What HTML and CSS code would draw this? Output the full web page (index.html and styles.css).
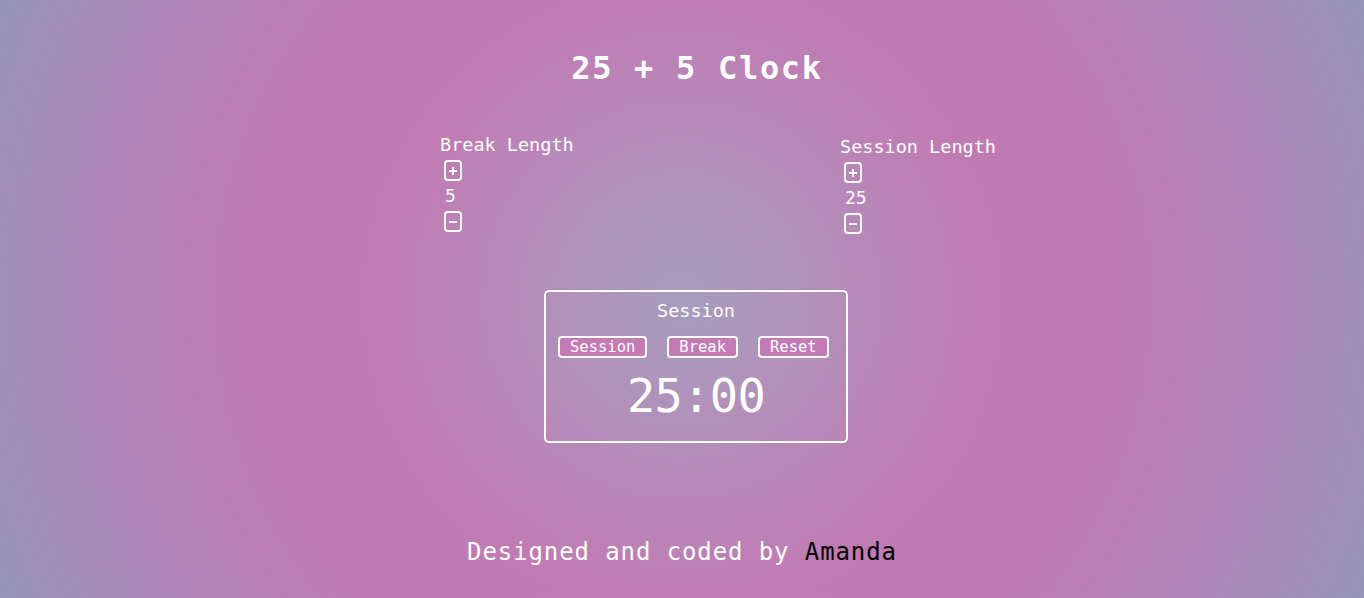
FILE: index.html
```html
<!DOCTYPE html>
<html lang="en">
<head>
<meta charset="utf-8">
<title>25 + 5 Clock</title>
<link rel="stylesheet" href="styles.css">
</head>
<body>
<div class="app">
  <h1 class="title">25 + 5 Clock</h1>
  <div class="controls">
    <div class="control control-break">
      <div class="control-label">Break Length</div>
      <button class="step-btn" aria-label="increment break">
        <svg width="10" height="10" viewBox="0 0 10 10"><path d="M5 1v8M1 5h8" stroke="#fff" stroke-width="1.8" fill="none"/></svg>
      </button>
      <div class="control-value">5</div>
      <button class="step-btn" aria-label="decrement break">
        <svg width="10" height="10" viewBox="0 0 10 10"><path d="M1 5h8" stroke="#fff" stroke-width="1.8" fill="none"/></svg>
      </button>
    </div>
    <div class="control control-session">
      <div class="control-label">Session Length</div>
      <button class="step-btn" aria-label="increment session">
        <svg width="10" height="10" viewBox="0 0 10 10"><path d="M5 1v8M1 5h8" stroke="#fff" stroke-width="1.8" fill="none"/></svg>
      </button>
      <div class="control-value">25</div>
      <button class="step-btn" aria-label="decrement session">
        <svg width="10" height="10" viewBox="0 0 10 10"><path d="M1 5h8" stroke="#fff" stroke-width="1.8" fill="none"/></svg>
      </button>
    </div>
  </div>
  <div class="clock">
    <div class="clock-label">Session</div>
    <div class="clock-buttons">
      <button class="pill-btn">Session</button>
      <button class="pill-btn">Break</button>
      <button class="pill-btn">Reset</button>
    </div>
    <div class="clock-time">25:00</div>
  </div>
  <footer class="footer">Designed and coded by <span class="author">Amanda</span></footer>
</div>
</body>
</html>
```

FILE: styles.css
```css
html, body {
  margin: 0;
  padding: 0;
  height: 100%;
}
body {
  font-family: "DejaVu Sans Mono", "Liberation Mono", monospace;
  color: #fff;
  background: radial-gradient(circle at 50% 50%, #a69dbd 0%, #b28fba 18%, #c07bb3 40%, #c07ab3 58%, #ad86b7 80%, #9494b5 100%);
  overflow: hidden;
}
.app {
  padding-top: 48px;
}
.title {
  margin: 0;
  padding-left: 30px;
  text-align: center;
  font-size: 32px;
  line-height: 40px;
  font-weight: bold;
  letter-spacing: 1.7px;
}
.controls {
  display: flex;
  margin-top: 47px;
  padding-left: 440px;
}
.control {
  display: flex;
  flex-direction: column;
  align-items: flex-start;
}
.control-break {
  width: 400px;
}
.control-session {
  margin-top: 2px;
}
.control-label {
  font-size: 18.5px;
  line-height: 20px;
}
.step-btn {
  box-sizing: border-box;
  width: 18px;
  height: 21px;
  margin-left: 4px;
  padding: 0;
  border: 2px solid #fff;
  border-radius: 4px;
  background: transparent;
  display: flex;
  align-items: center;
  justify-content: center;
}
.step-btn:first-of-type {
  margin-top: 5px;
}
.control-value {
  margin: 5px 0 5px 5px;
  font-size: 18px;
  line-height: 20px;
}
.clock {
  box-sizing: border-box;
  width: 304px;
  height: 153px;
  margin-top: 56px;
  margin-left: calc(50% - 138px);
  border: 2px solid #fff;
  border-radius: 5px;
  padding-top: 9px;
}
.clock-label {
  text-align: center;
  font-size: 18.5px;
  line-height: 20px;
}
.clock-buttons {
  display: flex;
  gap: 20px;
  margin-top: 15px;
  padding-left: 12px;
}
.pill-btn {
  font-family: inherit;
  font-size: 15.5px;
  line-height: 18px;
  color: #fff;
  background: #c47ab5;
  border: 2px solid #fff;
  border-radius: 4px;
  padding: 0 10px;
  margin: 0;
}
.clock-time {
  margin-top: 12px;
  text-align: center;
  font-size: 47px;
  line-height: 52px;
  letter-spacing: -0.7px;
}
.footer {
  margin-top: 94px;
  text-align: center;
  font-size: 24px;
  line-height: 30px;
  letter-spacing: 0.9px;
}
.author {
  color: #000;
}
```
